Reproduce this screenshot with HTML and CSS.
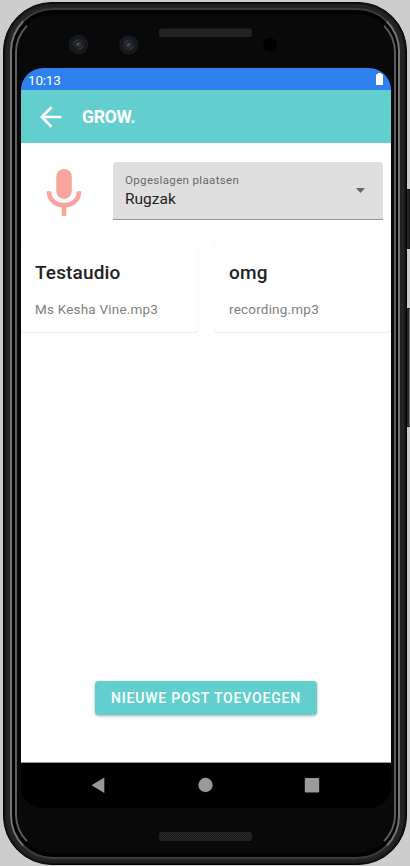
FILE: index.html
```html
<!DOCTYPE html>
<html lang="nl">
<head>
<meta charset="utf-8">
<title>GROW.</title>
<link rel="stylesheet" href="styles.css">
</head>
<body>
<div class="side-key power"></div>
<div class="side-key volume"></div>
<main class="phone">
  <div class="rail"><div class="groove"><div class="bezel">
    <div class="forehead">
      <svg width="370" height="53" viewBox="21 15 370 53">
        <defs><pattern id="mesh" width="2" height="2" patternUnits="userSpaceOnUse"><path fill="#1a1a1a" d="M0 0h2v2H0z"/><path fill="#2a2a2a" d="M0 0h1v1H0zM1 1h1v1H1z"/></pattern></defs>
        <rect x="159" y="28.500" width="93" height="8.500" rx="3" fill="url(#mesh)"/>
        <g id="lens"><circle cx="78.500" cy="44.500" r="9.800" fill="#151a1e"/><circle cx="78.500" cy="44.500" r="6" fill="#202326"/><path d="M74 43a5 5 0 0 1 4-3M83 46a5 5 0 0 1-4 3" stroke="#3c4044" fill="none"/><circle cx="78.500" cy="44.500" r="2.500" fill="#30353c"/><path d="M77 45l2-2" stroke="#74777d"/></g>
        <use href="#lens" x="50.300" y=".5"/>
        <circle cx="270" cy="45" r="7" fill="#000"/>
      </svg>
    </div>
    <section class="screen">
      <div class="status"><span>10:13</span>
        <svg class="battery" width="7" height="12" viewBox="0 0 7 12"><path d="M2 0h3v1h1q1 0 1 1v10H0V2q0-1 1-1h1z" fill="#fff"/></svg>
      </div>
      <header class="appbar">
        <svg width="22" height="22" viewBox="0 0 22 22" fill="none" stroke="#fff" stroke-width="2.700"><path d="M21.500 11H2M11.500 1.200L1.800 11l9.700 9.800"/></svg>
        <h1>GROW.</h1>
      </header>
      <div class="content">
        <div class="controls">
          <svg class="mic" width="36" height="48" viewBox="0 0 36 48"><rect x="10.300" y="1" width="15.500" height="30" rx="7.700" fill="#f9a59d"/><path d="M3 23.300C3 32 9.500 37.300 18 37.300S33 32 33 23.300M18 37v11" fill="none" stroke="#f9a59d" stroke-width="4.600"/></svg>
          <div class="select">
            <div class="field"><div class="label">Opgeslagen plaatsen</div><div class="value">Rugzak</div></div>
            <svg width="9" height="5" viewBox="0 0 9 5"><path d="M0 0h9L4.500 5z" fill="#666"/></svg>
          </div>
        </div>
        <div class="cards">
          <article class="card"><h2>Testaudio</h2><p>Ms Kesha Vine.mp3</p></article>
          <article class="card"><h2>omg</h2><p>recording.mp3</p></article>
        </div>
        <button class="add">NIEUWE POST TOEVOEGEN</button>
      </div>
      <nav class="navbar">
        <svg width="370" height="45" viewBox="0 0 370 45" fill="#999"><path d="M70.500 22.200L83.300 14.500v15.400z"/><circle cx="184.500" cy="22" r="7.200"/><rect x="283.800" y="15" width="14.400" height="14.400" rx="1"/></svg>
      </nav>
    </section>
    <svg class="chin" width="370" height="43" viewBox="21 808 370 43"><rect x="159" y="832" width="93" height="9" rx="3" fill="url(#mesh)"/></svg>
  </div></div></div>
</main>
</body>
</html>
```
FILE: styles.css
```css
* { box-sizing: border-box; }
body { margin: 0; width: 410px; height: 866px; background: #cdcdcd; overflow: hidden; position: relative; font-family: Roboto, sans-serif; }
svg { display: block; flex: none; }
.phone { position: relative; margin-left: 3px; padding-top: 2px; width: 404px; }
.rail { height: 863px; padding: 5px 6px; border-radius: 49px; background: #242424; border: 1px solid #030303; box-shadow: inset 0 0 2px 1px #0c0c0c; }
.groove { height: 851px; padding: 4px 2px 4px 3px; border-radius: 43px; background: #020202; border: 2px solid #747474; border-top-color: #3c3c3c; border-bottom-color: #3c3c3c; }
.bezel { height: 839px; border-radius: 38px; border: 2px solid #5c5c64; border-top-color: #090909; border-bottom-color: #090909; background: #090909; padding-left: 4px; display: flex; flex-direction: column; align-items: flex-start; }
.forehead { height: 52px; display: flex; align-items: flex-end; }
.screen { flex: none; width: 370px; height: 740px; border-radius: 22px; overflow: hidden; background: #000; }
.status { height: 22px; display: flex; justify-content: space-between; align-items: center; background: #2e80ed; color: #fff; font-size: 13.500px; letter-spacing: -.2px; padding: 1px 8px 0 7px; }
.battery { margin-top: -1px; }
.appbar { height: 53px; display: flex; align-items: center; gap: 20px; background: #62cfce; padding-left: 19px; color: #fff; }
.appbar h1 { margin: 1px 0 0; font-size: 17.500px; line-height: 20px; font-weight: 700; letter-spacing: -.2px; }
.content { height: 620px; display: flex; flex-direction: column; align-items: center; background: #fff; border-bottom: 1px solid #999; }
.controls { width: 100%; height: 101px; display: flex; padding-top: 19px; }
.mic { margin: 6px 31px 0 25px; }
.select { width: 270px; height: 58px; border-radius: 4px 4px 0 0; background: #dfdfdf; border-bottom: 1px solid #999; display: flex; align-items: center; justify-content: space-between; padding: 0 18px 0 12px; }
.field { padding-bottom: 2px; }
.label { font-size: 11.500px; line-height: 14px; letter-spacing: .35px; color: #696969; margin-top: 1px; }
.value { font-size: 15.500px; line-height: 18px; letter-spacing: 0; color: #222; margin-top: 3px; }
.cards { width: 100%; display: flex; gap: 16px; }
.card { flex: none; width: 177px; height: 88px; padding: 17px 14px 0; border-radius: 4px; box-shadow: 0 0 1px #ddd, 0 1px 1px #eee; }
.card + .card { padding-left: 15px; }
.card h2 { margin: 0; font-size: 19px; line-height: 24px; font-weight: 500; letter-spacing: .15px; color: #222; }
.card p { margin: 15px 0 0; font-size: 13.500px; line-height: 18px; letter-spacing: .2px; color: #808080; white-space: nowrap; }
.add { width: 222px; height: 34px; margin-top: 349px; flex: none; border: 0; border-radius: 4px; background: #62cfce; color: #fff; font: 500 14px/35px Roboto, sans-serif; letter-spacing: .82px; padding: 0; box-shadow: 0 1px 3px #aaa; white-space: nowrap; }
.navbar { height: 45px; background: #000; }
.side-key { position: absolute; right: 0; width: 5px; background: #292929; border: 1px solid #151515; }
.power { top: 189px; height: 60px; }
.volume { top: 308px; height: 119px; border-right-color: #777; }
```
